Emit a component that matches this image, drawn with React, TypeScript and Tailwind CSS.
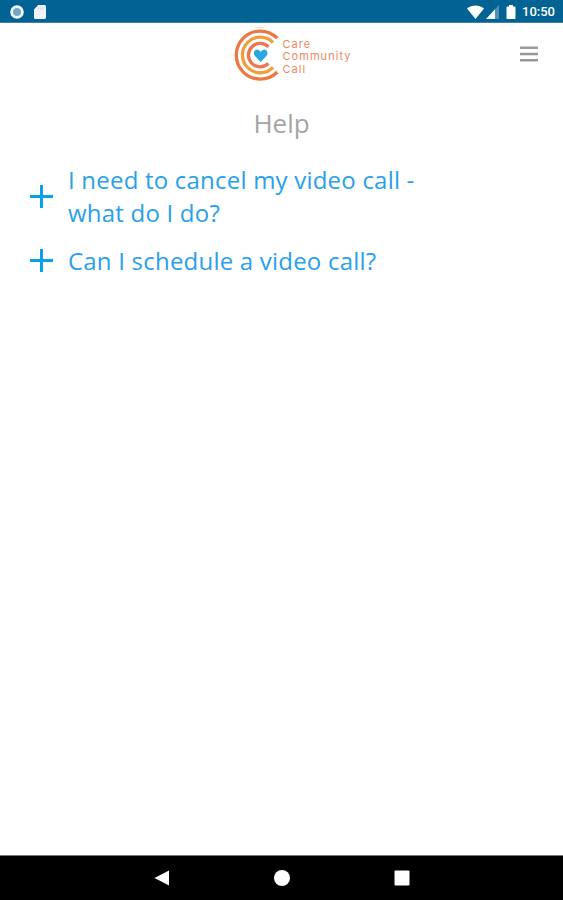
import { type ReactNode } from 'react';

const questions = [
  'I need to cancel my video call - what do I do?',
  'Can I schedule a video call?',
];

function StatusBar() {
  return (
    <div className="flex h-[23px] shrink-0 items-center justify-between border-b border-[#447f9f] bg-[#006393] pl-[10px] pr-2">
      <div className="flex items-center gap-[10px] pt-px">
        <svg width="14" height="14" viewBox="0 0 14 14">
          <circle cx="7" cy="7" r="5.4" fill="#6fa9c5" stroke="#f4f8fb" strokeWidth="2.8" />
        </svg>
        <svg width="12" height="14" viewBox="0 0 12 14">
          <path d="M4.2 0H10.5a1.5 1.5 0 0 1 1.5 1.5v11a1.5 1.5 0 0 1-1.5 1.5h-9A1.5 1.5 0 0 1 0 12.5V4.5Z" fill="#eff2f9" />
          <path d="M4.5 2.2v2.3M6.7 2.2v2.3M8.9 2.2v2.3" stroke="#c9d8e5" />
        </svg>
      </div>
      <div className="flex items-center pt-px">
        <svg width="17" height="14" viewBox="0 0 17 14">
          <path d="M0 3.6C5 -.7 12 -.7 17 3.6L8.5 14Z" fill="#fff" />
        </svg>
        <svg className="ml-[2px]" width="13" height="14" viewBox="0 0 13 14">
          <path d="M13 0V14H0Z" fill="#4f92b5" />
          <path d="M9 4.3V14H0Z" fill="#f2f7fa" />
        </svg>
        <svg className="ml-[7px]" width="10" height="14" viewBox="0 0 10 14">
          <path d="M3 0h4v1.5h1.5a1 1 0 0 1 1 1V13a1 1 0 0 1-1 1h-7a1 1 0 0 1-1-1V2.5a1 1 0 0 1 1-1H3Z" fill="#fff" />
        </svg>
        <span className="ml-[6px] w-[33px] whitespace-nowrap font-['Roboto',sans-serif] text-[13px] font-medium leading-none text-white">
          10:50
        </span>
      </div>
    </div>
  );
}

function Logo() {
  return (
    <div className="flex items-center">
      <svg width="48" height="56" viewBox="0 0 48 56" fill="none">
        <path d="M43.3 12.2A24 24 0 1 0 43.3 46" stroke="#ed7844" strokeWidth="3.3" />
        <path d="M39 16.6A17.8 17.8 0 1 0 39 41.4" stroke="#f19d39" strokeWidth="3.3" />
        <path d="M34.4 20.8A11.7 11.7 0 1 0 34.4 37.4" stroke="#ed7550" strokeWidth="3.3" />
        <path d="M22 1.5h8" stroke="#f9dfd0" />
        <path
          d="M26.7 36L21 30C18 26.5 21.7 21.8 25 24.2L26.7 25.8L28.4 24.2C31.7 21.8 35.4 26.5 32.4 30Z"
          fill="#29a9e0"
        />
      </svg>
      <div className="w-[70px] pt-[5px] pl-px font-['Inter',sans-serif] text-[11px] leading-[12.6px] tracking-[1.05px] text-[#ee8765]">
        <div>Care</div>
        <div>Community</div>
        <div>Call</div>
      </div>
    </div>
  );
}

function Question({ children }: { children: ReactNode }) {
  return (
    <button className="flex w-[400px] items-center text-left text-[24px] leading-[33px] tracking-[0.21px] text-[#29a0ea]">
      <svg className="mr-[15px] shrink-0" width="23" height="23" viewBox="0 0 23 23">
        <path d="M0 11.5H23M11.5 0V23" stroke="#08a0f3" strokeWidth="3" />
      </svg>
      <span className="w-[356px]">{children}</span>
    </button>
  );
}

export default function App() {
  return (
    <div className="flex h-[900px] w-[563px] flex-col overflow-hidden bg-white font-['Open_Sans',sans-serif]">
      <StatusBar />

      <header className="grid h-[62px] shrink-0 grid-cols-[1fr_auto_1fr] items-center">
        <div className="col-start-2 ml-[22px]">
          <Logo />
        </div>
        <button className="mr-[25px] justify-self-end" aria-label="Menu">
          <svg width="18" height="16" viewBox="0 0 18 16">
            <path d="M0 1.8H18M0 8H18M0 14.2H18" stroke="#999" strokeWidth="2.4" />
          </svg>
        </button>
      </header>

      <main className="flex-1">
        <h1 className="mt-[20px] text-center text-[26px] leading-[36px] text-[#a5a5a5]">Help</h1>
        <div className="mt-[22px] flex flex-col gap-[15px] pl-[30px]">
          {questions.map((question) => (
            <Question key={question}>{question}</Question>
          ))}
        </div>
      </main>

      {/* Android navigation */}
      <nav className="flex h-[45px] shrink-0 items-center justify-center gap-[104px] border-t border-[#777] bg-black">
        <svg width="16" height="16" viewBox="0 0 16 16">
          <path d="M15 .5V15.5L.5 8Z" fill="#fff" />
        </svg>
        <svg width="16" height="16" viewBox="0 0 16 16">
          <circle cx="8" cy="8" r="8" fill="#fff" />
        </svg>
        <svg width="16" height="16" viewBox="0 0 16 16">
          <rect x=".5" y=".5" width="15" height="15" rx="1" fill="#fff" />
        </svg>
      </nav>
    </div>
  );
}
